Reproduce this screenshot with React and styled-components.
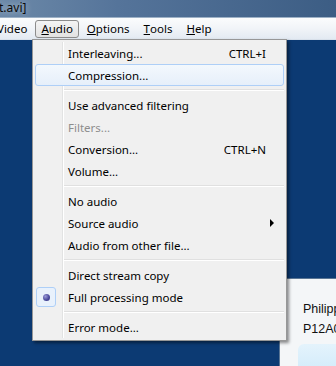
import React from "react";
import styled, { createGlobalStyle } from "styled-components";

const GlobalStyle = createGlobalStyle`
  html, body {
    margin: 0;
    padding: 0;
    width: 336px;
    height: 366px;
    overflow: hidden;
  }
  #root {
    height: 100%;
  }
`;

const Screen = styled.div`
  position: relative;
  display: flex;
  flex-direction: column;
  width: 336px;
  height: 366px;
  overflow: hidden;
  font-family: "Segoe UI", "Noto Sans", sans-serif;
  font-size: 11.5px;
  color: #000;
`;

const TitleBar = styled.div`
  height: 17px;
  display: flex;
  align-items: center;
  background: linear-gradient(to right, #6c89a8 0%, #55749a 35%, #3c5d84 100%);
  color: #0b0b0b;
  font-size: 12px;
  text-shadow: 0 0 6px rgba(255, 255, 255, 0.6);
  white-space: nowrap;
`;

const TitleText = styled.span`
  margin-left: -1px;
  margin-top: -2px;
`;

const MenuBar = styled.div`
  height: 21px;
  display: flex;
  align-items: center;
  gap: 2px;
  border-top: 1px solid #9db1c6;
  background: linear-gradient(#fbfcfd 0%, #f1f4f8 50%, #e3eaf2 100%);
  border-bottom: 1px solid #d8e0ea;
  white-space: nowrap;
`;

const BarItem = styled.div`
  height: 16px;
  display: flex;
  align-items: center;
  padding: 0 5px;
  border: 1px solid ${(p) => (p.open ? "#8c8c8c" : "transparent")};
  border-radius: 3px;
  background: ${(p) =>
    p.open ? "linear-gradient(#f4f4f4, #e2e2e2)" : "transparent"};
  margin-left: ${(p) => p.offset || 0}px;
`;

const Desktop = styled.div`
  flex: 1;
  position: relative;
  background: #0c3a73;
`;

const Menu = styled.div`
  position: absolute;
  left: 32px;
  top: 39px;
  width: 255px;
  box-sizing: border-box;
  padding: 2px;
  border: 1px solid #979797;
  background: #f0f0f0;
  box-shadow: 2px 2px 3px rgba(0, 0, 0, 0.45);
  z-index: 2;
`;

const Gutter = styled.div`
  position: absolute;
  left: 29px;
  top: 2px;
  bottom: 2px;
  width: 1px;
  background: #e2e3e3;
  border-right: 1px solid #ffffff;
`;

const Item = styled.div`
  position: relative;
  height: 22px;
  box-sizing: border-box;
  display: grid;
  grid-template-columns: 32px 1fr auto 17px;
  align-items: center;
  border: 1px solid ${(p) => (p.hot ? "#aecff7" : "transparent")};
  border-radius: 3px;
  background: ${(p) =>
    p.hot ? "linear-gradient(#f3f8fd, #e6effa)" : "transparent"};
  color: ${(p) => (p.disabled ? "#8d8d8d" : "#000")};
  white-space: nowrap;
`;

const Check = styled.div`
  width: 20px;
  height: 20px;
  box-sizing: border-box;
  display: flex;
  align-items: center;
  justify-content: center;
  border: 1px solid ${(p) => (p.on ? "#aecff7" : "transparent")};
  border-radius: 3px;
  background: ${(p) => (p.on ? "#e8f1fc" : "transparent")};
`;

const Bullet = styled.div`
  width: 7px;
  height: 7px;
  border-radius: 50%;
  background: radial-gradient(circle at 35% 35%, #9a9ad8 0%, #4b4b9e 55%, #2e2e78 100%);
`;

const Shortcut = styled.span`
  justify-self: end;
`;

const Arrow = styled.span`
  width: 0;
  height: 0;
  margin-left: 4px;
  border-left: 4px solid #000;
  border-top: 4px solid transparent;
  border-bottom: 4px solid transparent;
`;

const Separator = styled.div`
  height: 8px;
  display: flex;
  align-items: center;
  padding-left: 29px;
  &::before {
    content: "";
    flex: 1;
    height: 1px;
    background: #e0e0e0;
    border-bottom: 1px solid #ffffff;
  }
`;

const Window = styled.div`
  position: absolute;
  left: 279px;
  top: 238px;
  right: -10px;
  bottom: -10px;
  box-sizing: border-box;
  padding: 20px 0 0 23px;
  background: #f4f6f8;
  border-left: 1px solid #5a7594;
  border-top: 1px solid #5a7594;
  line-height: 20px;
  color: #111;
  font-family: "Liberation Sans", Arial, sans-serif;
  font-size: 12.5px;
  white-space: nowrap;
  z-index: 1;
`;

const Glow = styled.div`
  position: absolute;
  left: 18px;
  top: 65px;
  right: 0;
  bottom: 0;
  border-radius: 6px 0 0 0;
  background: linear-gradient(#e4f3fc, #cfeafa);
`;

const items = [
  { label: "Interleaving...", shortcut: "CTRL+I" },
  { label: "Compression...", hot: true },
  "sep",
  { label: "Use advanced filtering" },
  { label: "Filters...", disabled: true },
  { label: "Conversion...", shortcut: "CTRL+N" },
  { label: "Volume..." },
  "sep",
  { label: "No audio" },
  { label: "Source audio", submenu: true },
  { label: "Audio from other file..." },
  "sep",
  { label: "Direct stream copy" },
  { label: "Full processing mode", checked: true },
  "sep",
  { label: "Error mode..." },
];

export default function App() {
  return (
    <Screen>
      <GlobalStyle />
      <TitleBar>
        <TitleText>t.avi]</TitleText>
      </TitleBar>
      <MenuBar>
        <BarItem offset={-9}>Video</BarItem>
        <BarItem open>
          <u>A</u>udio
        </BarItem>
        <BarItem>
          <u>O</u>ptions
        </BarItem>
        <BarItem>
          <u>T</u>ools
        </BarItem>
        <BarItem>
          <u>H</u>elp
        </BarItem>
      </MenuBar>
      <Desktop>
        <Window>
          <div>Philipp</div>
          <div>P12A0</div>
          <Glow />
        </Window>
      </Desktop>
      <Menu>
        <Gutter />
        {items.map((it, i) =>
          it === "sep" ? (
            <Separator key={i} />
          ) : (
            <Item key={i} hot={it.hot} disabled={it.disabled}>
              <Check on={it.checked}>{it.checked && <Bullet />}</Check>
              <span>{it.label}</span>
              <Shortcut>{it.shortcut}</Shortcut>
              {it.submenu ? <Arrow /> : <span />}
            </Item>
          )
        )}
      </Menu>
    </Screen>
  );
}
